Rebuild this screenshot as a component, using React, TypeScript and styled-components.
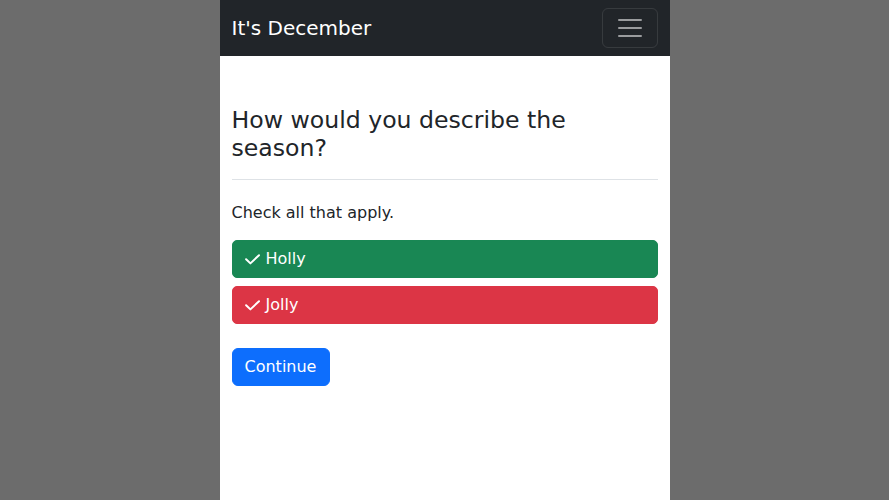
import React from "react";
import styled, { createGlobalStyle } from "styled-components";

const Global = createGlobalStyle`
  html, body { margin: 0; padding: 0; height: 100%; }
  body {
    background: #6c6c6c;
    font-family: "DejaVu Sans", "Noto Sans", sans-serif;
    font-size: 16px;
    line-height: 1.5;
    color: #212529;
  }
  * { box-sizing: border-box; }
`;

const Column = styled.div`
  width: 450px;
  margin: 0 auto;
  min-height: 100vh;
  background: #fff;
`;

const Navbar = styled.nav`
  background: #212529;
  height: 56px;
  padding: 8px 12px;
  display: flex;
  align-items: center;
  justify-content: space-between;
`;

const Brand = styled.span`
  color: #fff;
  font-size: 20px;
  line-height: 30px;
`;

const Toggler = styled.button`
  width: 56px;
  height: 40px;
  padding: 4px 12px;
  background: transparent;
  border: 1px solid rgba(255, 255, 255, 0.1);
  border-radius: 6px;
  display: flex;
  align-items: center;
  justify-content: center;
`;

const Main = styled.main`
  padding: 50px 12px 0;
`;

const Heading = styled.h4`
  margin: 0 0 8px;
  font-size: 23.6px;
  font-weight: 400;
  line-height: 28px;
`;

const Rule = styled.hr`
  margin: 17px 0 21px;
  border: 0;
  border-top: 1px solid #dee2e6;
`;

const Lead = styled.p`
  margin: 0 0 15px;
`;

const Options = styled.div`
  display: flex;
  flex-direction: column;
  gap: 8px;
`;

const OptionButton = styled.button<{ $bg: string }>`
  display: flex;
  align-items: center;
  gap: 6px;
  width: 100%;
  height: 38px;
  padding: 6px 12px;
  background: ${(p) => p.$bg};
  color: #fff;
  border: 1px solid ${(p) => p.$bg};
  border-radius: 5px;
  font-family: inherit;
  font-size: 16px;
  line-height: 24px;
  text-align: left;
`;

const ContinueButton = styled.button`
  margin-top: 24px;
  height: 38px;
  padding: 6px 13px 6px 12px;
  background: #0d6efd;
  color: #fff;
  border: 1px solid #0d6efd;
  border-radius: 6px;
  font-family: inherit;
  font-size: 16px;
  line-height: 24px;
`;

const CheckIcon = () => (
  <svg width="15" height="11" viewBox="0 0 15 11" fill="none" style={{ marginTop: 1 }}>
    <polyline
      points="1.1,5.2 5.4,9.4 14,1.2"
      stroke="currentColor"
      strokeWidth="2"
      strokeLinecap="round"
      strokeLinejoin="round"
    />
  </svg>
);

const TogglerIcon = () => (
  <svg width="30" height="30" viewBox="0 0 30 30">
    <path
      stroke="rgba(255,255,255,0.55)"
      strokeLinecap="round"
      strokeMiterlimit="10"
      strokeWidth="2"
      d="M4 7h22M4 15h22M4 23h22"
    />
  </svg>
);

const options = [
  { label: "Holly", color: "#198754" },
  { label: "Jolly", color: "#dc3545" },
];

export default function App() {
  return (
    <>
      <Global />
      <Column>
        <Navbar>
          <Brand>It's December</Brand>
          <Toggler aria-label="Toggle navigation">
            <TogglerIcon />
          </Toggler>
        </Navbar>
        <Main>
          <Heading>How would you describe the season?</Heading>
          <Rule />
          <Lead>Check all that apply.</Lead>
          <Options>
            {options.map((o) => (
              <OptionButton key={o.label} $bg={o.color}>
                <CheckIcon />
                {o.label}
              </OptionButton>
            ))}
          </Options>
          <ContinueButton>Continue</ContinueButton>
        </Main>
      </Column>
    </>
  );
}
